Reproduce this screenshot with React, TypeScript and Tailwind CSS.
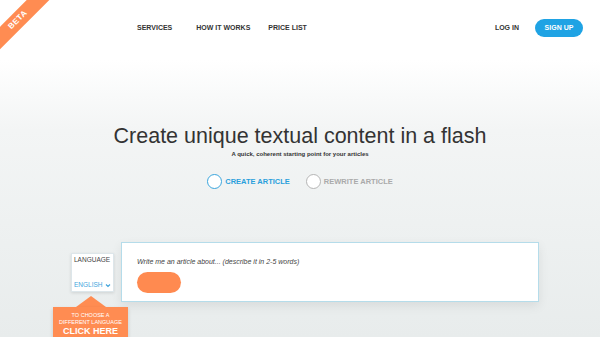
import React from "react";

export default function App() {
  return (
    <div
      className="relative w-full h-[337px] overflow-hidden bg-[linear-gradient(180deg,#ffffff_0px,#ffffff_60px,#f3f5f5_130px,#e8ecec_337px)]"
      style={{ fontFamily: '"Liberation Sans", Arial, sans-serif' }}
    >
      {/* beta ribbon */}
      <div className="absolute left-[-22px] top-[12px] w-[80px] h-[16px] bg-[#ff8c52] -rotate-45 flex items-center justify-center">
        <span className="text-white text-[8px] font-bold tracking-[0.5px]">BETA</span>
      </div>

      {/* nav */}
      <nav className="flex items-center h-[56px] pl-[137px] pr-[17px] text-[#333] text-[7px] font-bold">
        <a>SERVICES</a>
        <a className="ml-[24px]">HOW IT WORKS</a>
        <a className="ml-[18px]">PRICE LIST</a>
        <a className="ml-auto">LOG IN</a>
        <a className="ml-[16px] w-[48px] h-[18px] rounded-full bg-[#1fa3e4] text-white flex items-center justify-center">
          SIGN UP
        </a>
      </nav>

      {/* hero */}
      <div className="flex flex-col items-center mt-[67px]">
        <h1 className="text-[21.5px] leading-[26px] text-[#333] font-normal">
          Create unique textual content in a flash
        </h1>
        <p className="text-[6px] font-bold text-[#333] leading-[8px] mt-[1px]">
          A quick, coherent starting point for your articles
        </p>
        <div className="flex items-center mt-[16px] text-[7.5px] font-bold">
          <label className="flex items-center text-[#2aa0dc]">
            <span className="w-[15px] h-[15px] rounded-full border border-[#3aa5dd] bg-white" />
            <span className="ml-[3px]">CREATE ARTICLE</span>
          </label>
          <label className="flex items-center text-[#aaa] ml-[16px]">
            <span className="w-[15px] h-[15px] rounded-full border border-[#b5b5b5] bg-white" />
            <span className="ml-[3px]">REWRITE ARTICLE</span>
          </label>
        </div>
      </div>

      {/* form */}
      <div className="flex items-start mt-[53px] pl-[71px]">
        <div className="relative mt-[11px]">
          <div className="w-[43px] h-[39px] bg-white border border-[#dde6ea] shadow-[0_1px_3px_rgba(0,0,0,0.12)] flex flex-col justify-between px-[2px] py-[2px]">
            <span className="text-[6.5px] text-[#444] leading-[8px]">LANGUAGE</span>
            <span className="flex items-center justify-between text-[6.5px] text-[#45a6dc] leading-[8px]">
              ENGLISH
              <svg width="6" height="5" viewBox="0 0 6 5" fill="none">
                <path d="M1 1.5L3 3.5L5 1.5" stroke="#45a6dc" strokeWidth="1.2" />
              </svg>
            </span>
          </div>
          <div className="absolute left-[-18px] top-[43px] w-[75px] flex flex-col items-center">
            <div className="w-0 h-0 border-l-[15px] border-l-transparent border-r-[15px] border-r-transparent border-b-[11px] border-b-[#ff8c52]" />
            <div className="w-[75px] h-[40px] bg-[#ff8c52] flex flex-col items-center pt-[5px] text-white shadow-[0_2px_4px_rgba(0,0,0,0.15)]">
              <span className="text-[5.5px] leading-[7px]">TO CHOOSE A</span>
              <span className="text-[5.5px] leading-[7px]">DIFFERENT LANGUAGE</span>
              <span className="text-[9px] font-bold leading-[10px]">CLICK HERE</span>
            </div>
          </div>
        </div>
        <div className="ml-[7px] w-[418px] h-[60px] bg-white border border-[#b5dcea] shadow-[0_4px_10px_rgba(0,0,0,0.08)] pl-[15px] pt-[14px]">
          <p className="text-[7px] italic text-[#444] leading-[9px]">
            Write me an article about... (describe it in 2-5 words)
          </p>
          <button className="mt-[6px] w-[44px] h-[21px] rounded-full bg-[#ff8a50]" />
        </div>
      </div>
    </div>
  );
}
